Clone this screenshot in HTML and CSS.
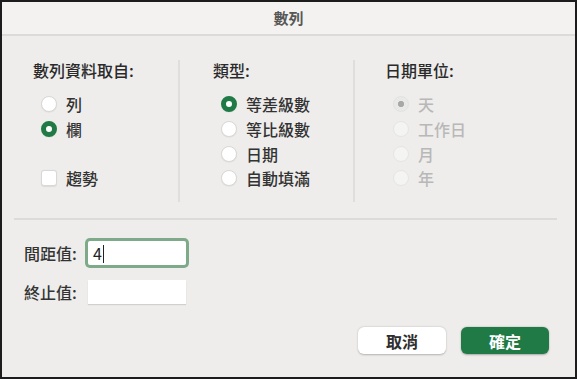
FILE: index.html
```html
<!DOCTYPE html>
<html lang="zh-Hant">
<head>
    <meta charset="UTF-8">
    <meta name="viewport" content="width=device-width, initial-scale=1.0">
    <title>數列</title>
    <link rel="stylesheet" href="styles.css">
</head>
<body>

<div class="dialog">
    <div class="titlebar">數列</div>

    <div class="groups">
        <div class="group group-source">
            <div class="heading">數列資料取自:</div>
            <div class="choices">
                <div class="choice"><span class="radio"></span>列</div>
                <div class="choice"><span class="radio on"></span>欄</div>
                <div class="choice"></div>
                <div class="choice"><span class="check"></span>趨勢</div>
            </div>
        </div>

        <div class="group group-type">
            <div class="heading">類型:</div>
            <div class="choices">
                <div class="choice"><span class="radio on"></span>等差級數</div>
                <div class="choice"><span class="radio"></span>等比級數</div>
                <div class="choice"><span class="radio"></span>日期</div>
                <div class="choice"><span class="radio"></span>自動填滿</div>
            </div>
        </div>

        <div class="group group-unit">
            <div class="heading">日期單位:</div>
            <div class="choices disabled">
                <div class="choice"><span class="radio on"></span>天</div>
                <div class="choice"><span class="radio"></span>工作日</div>
                <div class="choice"><span class="radio"></span>月</div>
                <div class="choice"><span class="radio"></span>年</div>
            </div>
        </div>
    </div>

    <div class="rule"></div>

    <div class="fields">
        <div class="field">
            <label>間距值:</label>
            <div class="input focused">4<span class="caret"></span></div>
        </div>
        <div class="field">
            <label>終止值:</label>
            <div class="input"></div>
        </div>
    </div>

    <div class="actions">
        <button class="btn">取消</button>
        <button class="btn primary">確定</button>
    </div>
</div>

</body>
</html>
```

FILE: styles.css
```css
/* Series dialog */
body {
    margin: 0;
    padding: 0;
    font-family: "Noto Sans CJK TC", "Noto Sans", sans-serif;
    background: #eeedeb;
}

.dialog {
    width: 577px;
    height: 379px;
    box-sizing: border-box;
    border: 2px solid #1c1c1c;
    background: #eeedeb;
    color: #2e2e2e;
}

.titlebar {
    height: 32px;
    line-height: 32px;
    text-align: center;
    font-size: 15px;
    font-weight: bold;
    color: #575757;
    background: #f3f2f0;
    border-bottom: 2px solid #dcdbd9;
}

.groups {
    display: flex;
    margin-top: 24px;
    height: 142px;
}

.group {
    box-sizing: border-box;
    height: 142px;
}

.group-source {
    width: 178px;
    padding-left: 31px;
    border-right: 2px solid #dfdedc;
}

.group-type {
    width: 175px;
    padding-left: 33px;
    border-right: 2px solid #dfdedc;
}

.group-unit {
    padding-left: 30px;
}

.heading {
    font-size: 16px;
    font-weight: 500;
    line-height: 20px;
    color: #2a2a2a;
}

.choices {
    margin-top: 12px;
    padding-left: 8px;
}

.choice {
    display: flex;
    align-items: center;
    gap: 9px;
    height: 24.7px;
    font-size: 16px;
    font-weight: 500;
    color: #333;
}

.radio,
.check {
    width: 16px;
    height: 16px;
    box-sizing: border-box;
    background: #fff;
    border: 1px solid #d9d8d6;
    box-shadow: 0 0.5px 1px rgba(0, 0, 0, 0.08);
}

.radio {
    border-radius: 50%;
}

.radio.on {
    border: 5px solid #1f7a46;
}

.check {
    border-radius: 3px;
}

.choices.disabled .choice {
    color: #b8b8b8;
}

.choices.disabled .radio {
    background: #f4f4f3;
    border-color: #e6e5e3;
    box-shadow: none;
}

.choices.disabled .radio.on {
    border: 1px solid #e2e2e1;
    background: radial-gradient(circle, #a8a8a8 0, #a8a8a8 2.8px, #e9e9e8 3.4px);
}

.rule {
    height: 2px;
    margin: 16px 18px 0 12px;
    background: #dcdbd9;
}

.fields {
    margin-top: 21px;
    padding-left: 22px;
    display: flex;
    flex-direction: column;
    gap: 15px;
}

.field {
    display: flex;
    align-items: center;
    height: 24px;
}

.field label {
    width: 64px;
    font-size: 16px;
    font-weight: 500;
    color: #333;
}

.input {
    width: 98px;
    height: 24px;
    box-sizing: border-box;
    background: #fff;
    padding-left: 5px;
    font-size: 16px;
    line-height: 24px;
    color: #222;
    box-shadow: 0 1px 1px rgba(0, 0, 0, 0.12);
}

.input.focused {
    border-radius: 2px;
    box-shadow: 0 0 0 3px #7eaa8a;
}

.caret {
    display: inline-block;
    width: 1px;
    height: 18px;
    margin-left: 1px;
    background: #222;
    vertical-align: -3px;
}

.actions {
    display: flex;
    justify-content: flex-end;
    gap: 15px;
    margin-top: 23px;
    padding-right: 26px;
}

.btn {
    width: 88px;
    height: 27px;
    padding: 0;
    border: none;
    border-radius: 6px;
    font-family: inherit;
    font-size: 16px;
    font-weight: bold;
    color: #2e2e2e;
    background: #fff;
    box-shadow: 0 0.5px 2px rgba(0, 0, 0, 0.25);
}

.btn.primary {
    background: #1f7a46;
    color: #fff;
    box-shadow: 0 0.5px 2px rgba(0, 0, 0, 0.3);
}
```
